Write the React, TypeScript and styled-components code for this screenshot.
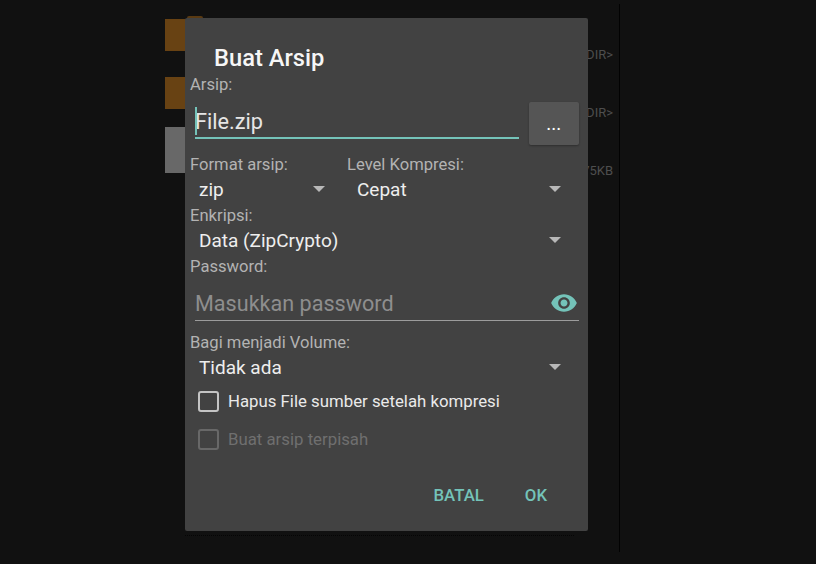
import React from 'react';
import styled, { createGlobalStyle } from 'styled-components';
import { MdVisibility } from 'react-icons/md';

const teal = '#74c3b9';

const GlobalStyle = createGlobalStyle`
    html, body {
        margin: 0;
        padding: 0;
        height: 100%;
        background: #111111;
        overflow: hidden;
    }
    #root {
        height: 100%;
    }
`;

const Page = styled.div`
    position: relative;
    width: 816px;
    height: 564px;
    display: flex;
    padding-left: 165px;
    box-sizing: border-box;
    background: #111111;
    font-family: Roboto, 'Liberation Sans', sans-serif;
`;

const FileList = styled.div`
    width: 455px;
    height: 548px;
    margin-top: 4px;
    box-sizing: border-box;
    border-right: 1px solid #020202;
    padding-top: 13px;
`;

const FileRow = styled.div`
    height: 58px;
    display: flex;
    align-items: flex-start;
    justify-content: space-between;
    padding-right: 6px;
`;

const FileIcon = styled.div<{ $kind: 'folder' | 'file' }>`
    position: relative;
    width: 40px;
    height: ${({ $kind }) => ($kind === 'folder' ? 32 : 46)}px;
    margin-top: ${({ $kind }) => ($kind === 'folder' ? 2 : -6)}px;
    background: ${({ $kind }) => ($kind === 'folder' ? '#684213' : '#686868')};
    &::before {
        content: '';
        display: ${({ $kind }) => ($kind === 'folder' ? 'block' : 'none')};
        position: absolute;
        left: 22px;
        top: -3px;
        width: 16px;
        height: 3px;
        border-radius: 2px 2px 0 0;
        background: #5a3a12;
    }
`;

const FileSize = styled.span`
    margin-top: 30px;
    font-size: 13px;
    line-height: 16px;
    color: #4e4e4e;
`;

const Dialog = styled.div`
    position: absolute;
    left: 185px;
    top: 18px;
    width: 403px;
    height: 513px;
    box-sizing: border-box;
    padding: 24px 9px 0 5px;
    display: flex;
    flex-direction: column;
    background: #424242;
    border-radius: 2px;
    &::after {
        content: '';
        position: absolute;
        left: 0;
        right: 14px;
        top: calc(100% + 4px);
        border-top: 1px dotted #050505;
    }
`;

const Title = styled.h1`
    margin: 0 0 0 24px;
    font-size: 23.7px;
    line-height: 32px;
    font-weight: 500;
    color: #f6f6f6;
`;

const Label = styled.div`
    height: 20px;
    font-size: 16.6px;
    line-height: 22px;
    color: #b3b3b3;
`;

const ArchiveRow = styled.div`
    height: 60px;
    display: flex;
    align-items: flex-start;
    gap: 10px;
`;

const ArchiveInput = styled.div`
    position: relative;
    width: 324px;
    height: 45px;
    margin-left: 5px;
    box-sizing: border-box;
    border-bottom: 2px solid ${teal};
    font-size: 21.7px;
    line-height: 55px;
    color: #e6e6e6;
`;

const Caret = styled.span`
    position: absolute;
    left: 0;
    top: 13px;
    width: 2px;
    height: 28px;
    background: ${teal};
`;

const BrowseButton = styled.div`
    width: 50px;
    height: 43px;
    margin-top: 8px;
    border-radius: 2px;
    background: #555555;
    box-shadow: 0 1px 2px rgba(0, 0, 0, 0.3);
    color: #ffffff;
    font-size: 16px;
    font-weight: 500;
    letter-spacing: 0.5px;
    line-height: 46px;
    text-align: center;
`;

const Columns = styled.div`
    display: flex;
`;

const Column = styled.div<{ $width: number }>`
    width: ${({ $width }) => $width}px;
`;

const Select = styled.div<{ $caretRight: number; $inset?: number }>`
    height: 30px;
    display: flex;
    align-items: center;
    justify-content: space-between;
    padding: 0 ${({ $caretRight }) => $caretRight}px 0 ${({ $inset }) => $inset ?? 9}px;
    font-size: 19px;
    color: #eeeeee;
    &::after {
        content: '';
        border-left: 6px solid transparent;
        border-right: 6px solid transparent;
        border-top: 6px solid #b8b8b8;
    }
`;

const Stacked = styled.div<{ $top?: number }>`
    margin-top: ${({ $top }) => $top ?? 0}px;
`;

const PasswordField = styled.div`
    height: 45px;
    margin: 0 0 11px 5px;
    box-sizing: border-box;
    border-bottom: 1.5px solid #9c9c9c;
    display: flex;
    align-items: flex-end;
    justify-content: space-between;
    padding-bottom: 2px;
    font-size: 21.6px;
    line-height: 28px;
    color: #8e8e8e;
    svg {
        display: block;
        margin: 0 1px 1px 0;
        color: ${teal};
    }
`;

const CheckRow = styled.div<{ $disabled?: boolean }>`
    height: 38px;
    margin-left: 8px;
    display: flex;
    align-items: center;
    gap: 9px;
    font-size: 16.8px;
    color: ${({ $disabled }) => ($disabled ? '#6f6f6f' : '#eaeaea')};
`;

const Box = styled.span<{ $disabled?: boolean }>`
    width: 21px;
    height: 21px;
    box-sizing: border-box;
    border: 2px solid ${({ $disabled }) => ($disabled ? '#686868' : '#c4c4c4')};
    border-radius: 3px;
`;

const Footer = styled.div`
    margin-top: 26px;
    display: flex;
    justify-content: flex-end;
    gap: 41px;
    padding-right: 32px;
`;

const FooterButton = styled.span`
    font-size: 16.8px;
    line-height: 22px;
    font-weight: 500;
    color: ${teal};
`;

const App: React.FC = () => (
    <>
        <GlobalStyle />
        <Page>
            <FileList>
                <FileRow>
                    <FileIcon $kind="folder" />
                    <FileSize>DIR&gt;</FileSize>
                </FileRow>
                <FileRow>
                    <FileIcon $kind="folder" />
                    <FileSize>DIR&gt;</FileSize>
                </FileRow>
                <FileRow>
                    <FileIcon $kind="file" />
                    <FileSize>75KB</FileSize>
                </FileRow>
            </FileList>
            <Dialog>
                <Title>Buat Arsip</Title>
                <Label>Arsip:</Label>
                <ArchiveRow>
                    <ArchiveInput>
                        <Caret />
                        File.zip
                    </ArchiveInput>
                    <BrowseButton>...</BrowseButton>
                </ArchiveRow>
                <Columns>
                    <Column $width={157}>
                        <Label>Format arsip:</Label>
                        <Select $caretRight={22}>zip</Select>
                    </Column>
                    <Column $width={232}>
                        <Label>Level Kompresi:</Label>
                        <Select $caretRight={18} $inset={10}>Cepat</Select>
                    </Column>
                </Columns>
                <Stacked $top={1}>
                    <Label>Enkripsi:</Label>
                    <Select $caretRight={18}>Data (ZipCrypto)</Select>
                </Stacked>
                <Stacked $top={1}>
                    <Label>Password:</Label>
                    <PasswordField>
                        Masukkan password
                        <MdVisibility size={28} />
                    </PasswordField>
                </Stacked>
                <Label>Bagi menjadi Volume:</Label>
                <Select $caretRight={18}>Tidak ada</Select>
                <CheckRow>
                    <Box />
                    Hapus File sumber setelah kompresi
                </CheckRow>
                <CheckRow $disabled>
                    <Box $disabled />
                    Buat arsip terpisah
                </CheckRow>
                <Footer>
                    <FooterButton>BATAL</FooterButton>
                    <FooterButton>OK</FooterButton>
                </Footer>
            </Dialog>
        </Page>
    </>
);

export default App;
